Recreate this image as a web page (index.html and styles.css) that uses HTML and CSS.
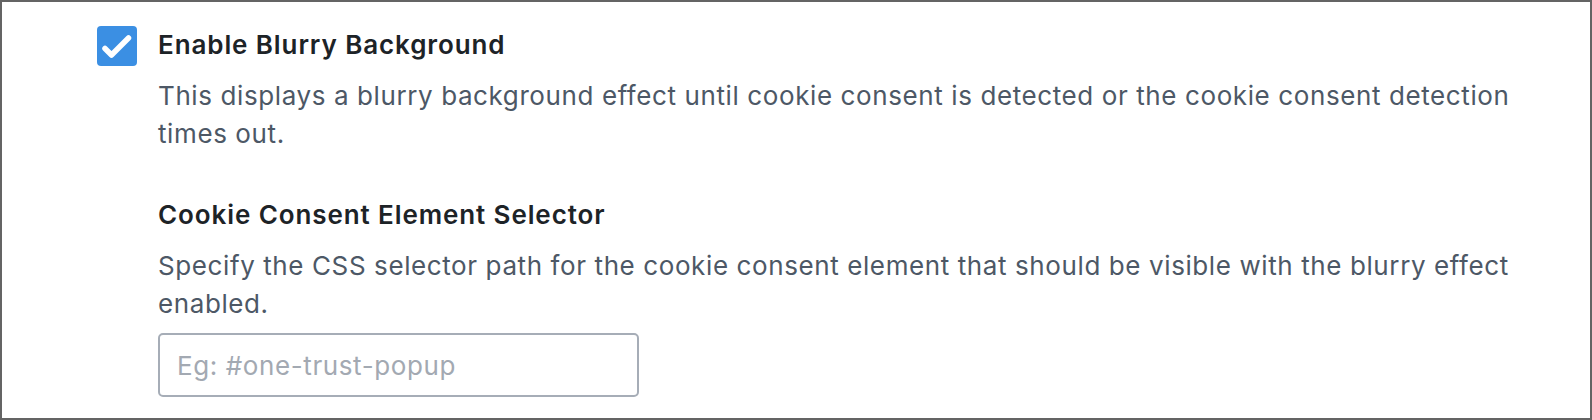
FILE: index.html
```html
<!DOCTYPE html>
<html lang="en">
  <head>
    <meta charset="UTF-8" />
    <meta name="viewport" content="width=device-width, initial-scale=1.0" />
    <title>Blurry Background Settings</title>
    <link rel="stylesheet" href="styles.css">
  </head>

  <body>
    <div class="panel">
      <div class="option">
        <span class="checkbox">
          <svg viewBox="0 0 40 40" class="checkbox-icon">
            <path
              d="M8 22.5l6.5 6.5L31.5 12"
              fill="none"
              stroke="#fff"
              stroke-width="5.5"
              stroke-linecap="round"
              stroke-linejoin="round"
            />
          </svg>
        </span>
        <div class="option-body">
          <p class="option-title">Enable Blurry Background</p>
          <p class="option-text">
            This displays a blurry background effect until cookie consent is
            detected or the cookie consent detection times out.
          </p>

          <div class="field">
            <p class="option-title">Cookie Consent Element Selector</p>
            <p class="option-text">
              Specify the CSS selector path for the cookie consent element that
              should be visible with the blurry effect enabled.
            </p>
            <input
              type="text"
              class="field-input"
              placeholder="Eg: #one-trust-popup"
            />
          </div>
        </div>
      </div>
    </div>
  </body>
</html>
```

FILE: styles.css
```css
/* MAIN COLOR: #3b8fe3 */
/* TEXT: #1d2327 / #4f5864 */

* {
  margin: 0;
  padding: 0;
  box-sizing: border-box;
}

body {
  font-family: "Inter", "Noto Sans", sans-serif;
  color: #1d2327;
  background-color: #fff;
}

.panel {
  width: 1592px;
  height: 420px;
  border: 2px solid #646464;
  padding: 24px 0 0 95px;
}

.option {
  display: flex;
  align-items: flex-start;
  gap: 21px;
}

.checkbox {
  flex: none;
  width: 40px;
  height: 40px;
  border-radius: 4px;
  background-color: #3b8fe3;

  display: flex;
}
.checkbox-icon {
  width: 40px;
  height: 40px;
}

.option-body {
  width: 1390px;
}

.option-title {
  font-size: 26px;
  font-weight: 600;
  line-height: 38px;
  letter-spacing: 0.9px;
  color: #1d2327;
  margin-bottom: 13px;
}
.option-text {
  font-size: 26px;
  line-height: 38px;
  letter-spacing: 0.6px;
  color: #4d5866;
}

.field {
  margin-top: 43px;
}

.field-input {
  display: block;
  margin-top: 10px;
  width: 481px;
  height: 64px;
  border: 2px solid #a6adb7;
  border-radius: 5px;
  padding: 0 17px;
  font-family: inherit;
  font-size: 26px;
  letter-spacing: 0.6px;
  color: #1d2327;
  outline: none;
}
.field-input::placeholder {
  color: #a3a9b2;
}
```
